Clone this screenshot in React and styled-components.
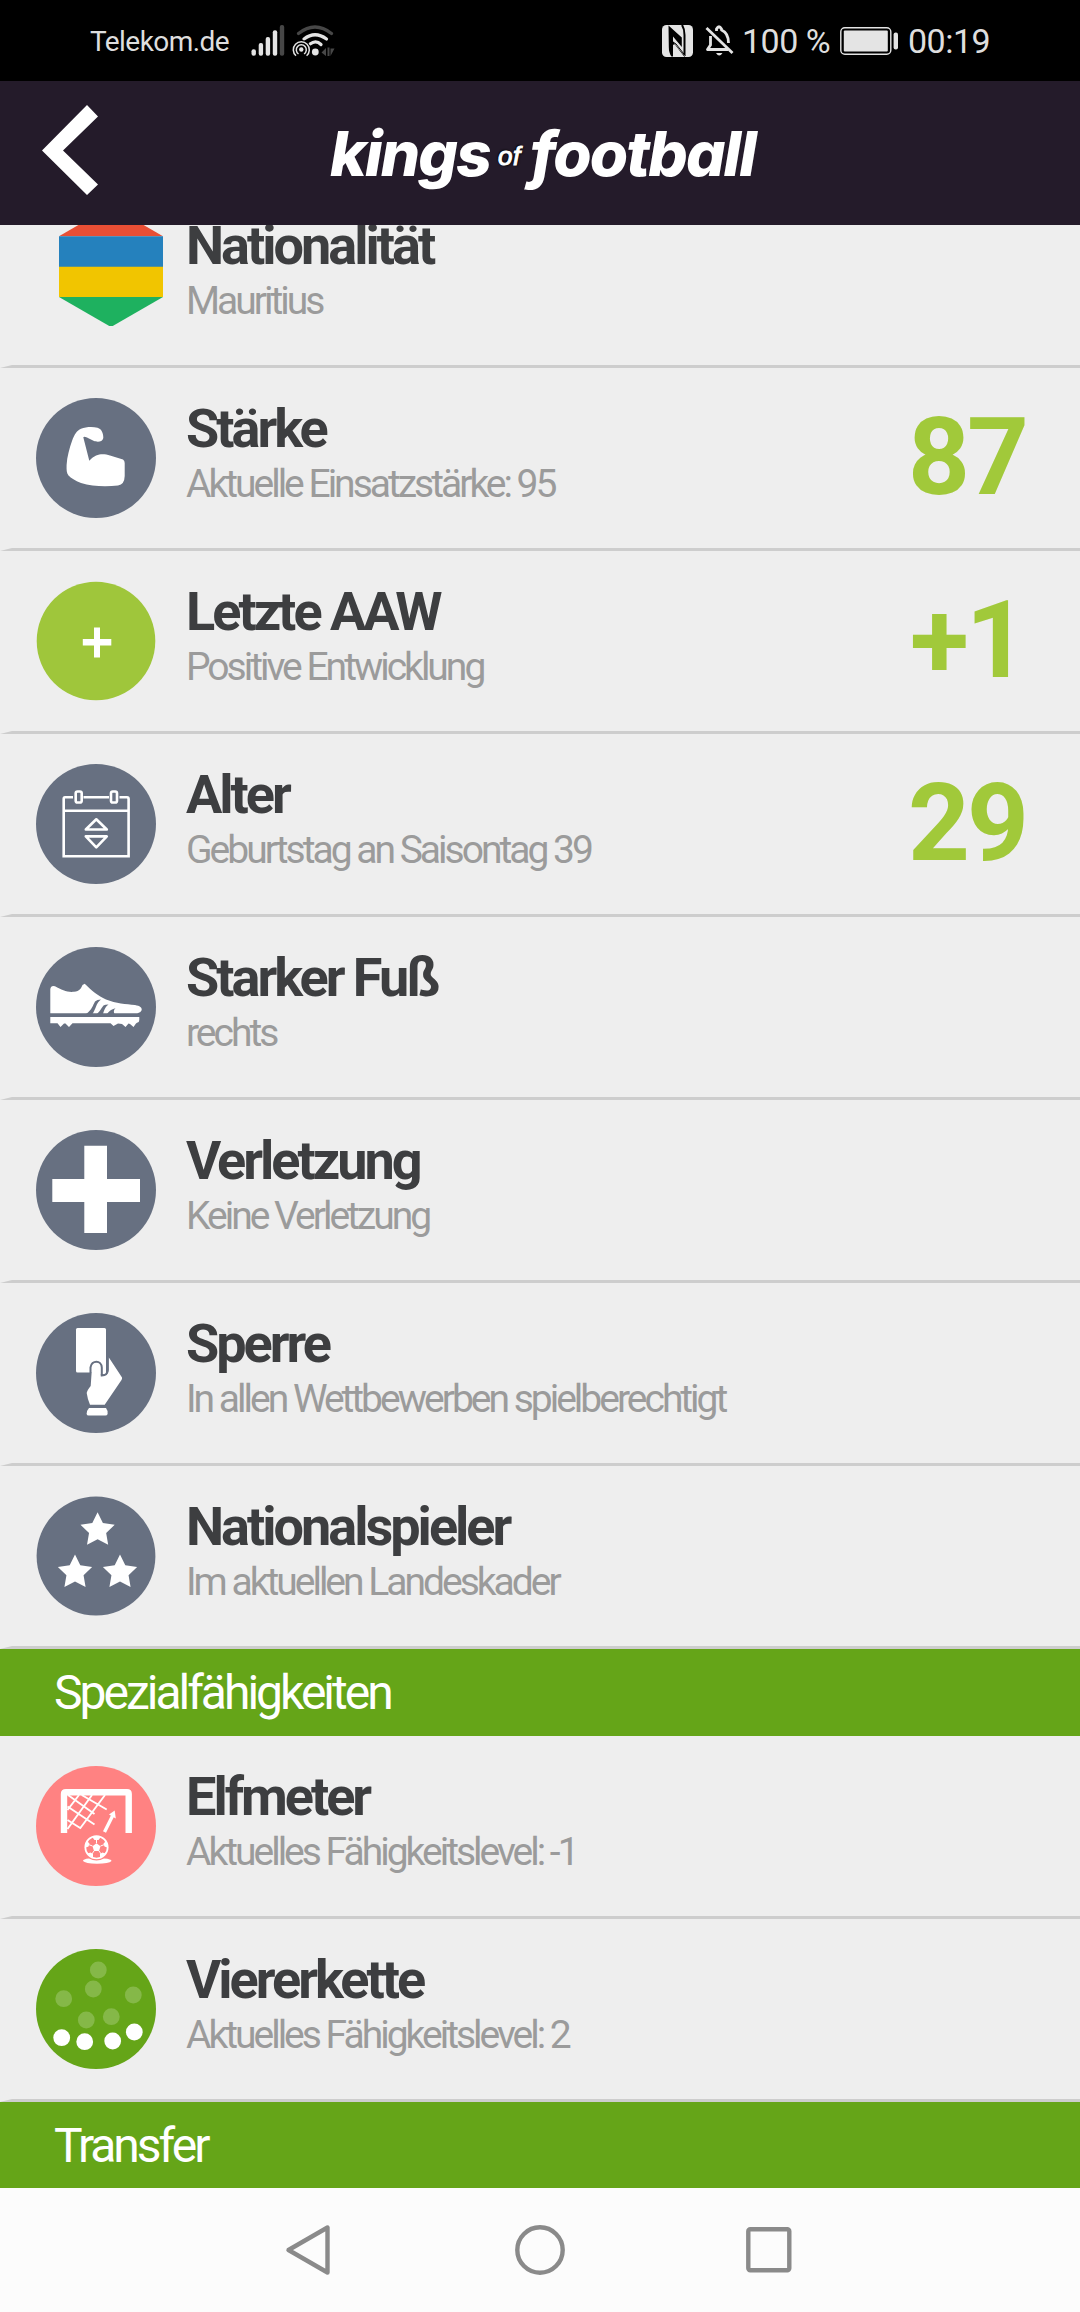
import React from 'react';
import styled, { createGlobalStyle } from 'styled-components';

const GlobalStyle = createGlobalStyle`
  * {
    box-sizing: border-box;
  }
  body {
    margin: 0;
    background: #eee;
    font-family: Roboto, 'Liberation Sans', sans-serif;
  }
  svg {
    display: block;
    flex-shrink: 0;
  }
`;

// Styled Components
const Screen = styled.div`
  display: flex;
  flex-direction: column;
  width: 1080px;
  height: 2312px;
  overflow: hidden;
`;

const StatusBar = styled.div`
  display: flex;
  align-items: center;
  justify-content: space-between;
  height: 81px;
  flex-shrink: 0;
  padding: 0 90px;
  background: #000;
  color: #dedede;
`;

const StatusGroup = styled.div`
  display: flex;
  align-items: center;
  height: 81px;
`;

const Carrier = styled.span`
  width: 161px;
  font-size: 28px;
  line-height: 33px;
  letter-spacing: -0.55px;
  padding-top: 1px;
`;

const StatusText = styled.span`
  width: ${(props) => props.$width}px;
  font-size: 34px;
  line-height: 40px;
  letter-spacing: -0.5px;
  white-space: nowrap;
  padding-top: 1px;
`;

const Header = styled.header`
  display: flex;
  height: 144px;
  flex-shrink: 0;
  background: #241b2a;
  color: #fff;
`;

const BackButton = styled.button`
  display: flex;
  align-items: flex-start;
  width: 330px;
  padding: 24px 0 0 41px;
  border: 0;
  background: none;
`;

const Logo = styled.h1`
  display: flex;
  align-items: baseline;
  margin: 0;
  padding-top: 37px;
  font-family: Inter, 'Liberation Sans', sans-serif;
  font-size: 62px;
  line-height: 72px;
  font-style: italic;
  font-weight: 800;
`;

const LogoWord = styled.span`
  width: ${(props) => props.$width}px;
  letter-spacing: ${(props) => props.$spacing}px;
`;

const LogoOf = styled.span`
  width: 32px;
  position: relative;
  top: -11px;
  font-family: 'Liberation Sans', Arial, sans-serif;
  font-size: 26px;
  line-height: 25px;
  font-weight: 400;
  letter-spacing: 0.5px;
  -webkit-text-stroke: 1px #fff;
  text-shadow: 1px 1px 2px #000, -1px -1px 2px #000;
`;

const List = styled.main`
  height: 1963px;
  flex-shrink: 0;
  overflow: hidden;
`;

// The list is scrolled, so the first row starts under the header
const Scrolled = styled.div`
  display: flex;
  flex-direction: column;
  margin-top: -40px;
`;

const Row = styled.div`
  display: flex;
  height: 183px;
  flex-shrink: 0;
  background: #eee;
  border-bottom: 3px solid #cdcdcd;
  border-left: 12px solid transparent;
`;

const IconSlot = styled.div`
  width: 174px;
  padding: ${(props) => (props.$flag ? '21px 0 0 47px' : '30px 0 0 24px')};
`;

const RowText = styled.div`
  flex: 1;
  padding-top: 31px;
`;

const Title = styled.h2`
  margin: 0;
  font-size: 54px;
  line-height: 60px;
  font-weight: 700;
  letter-spacing: -3px;
  color: #3d3e40;
`;

const Subtitle = styled.p`
  margin: 0;
  font-size: 39px;
  line-height: 50px;
  letter-spacing: -3px;
  color: #9b9b9b;
`;

const Value = styled.div`
  width: ${(props) => (props.$signed ? 170 : 172)}px;
  padding-top: 26px;
  font-size: 108px;
  line-height: 126px;
  font-weight: 700;
  letter-spacing: -3px;
  color: #a1c93a;
`;

const Section = styled.div`
  height: 87px;
  flex-shrink: 0;
  padding: 16px 0 0 54px;
  background: #65a518;
  color: #fff;
  font-size: 48px;
  line-height: 56px;
  letter-spacing: -3px;
`;

const NavBar = styled.nav`
  display: grid;
  grid-template-columns: repeat(3, 231px);
  justify-content: center;
  justify-items: center;
  align-items: center;
  height: 124px;
  background: #fcfcfc;
`;

const SLATE = '#677081';

const Badge = ({ color = SLATE, r = 60, children }) => (
  <svg width="120" height="120" viewBox="0 0 120 120">
    <circle cx="60" cy="60" r={r} fill={color} />
    {children}
  </svg>
);

const FlagIcon = () => (
  <svg width="104" height="120" viewBox="0 0 104 120">
    <path d="M52 0L104 30.3H0z" fill="#e94f35" />
    <path d="M0 30.3H104V61H0z" fill="#2581bd" />
    <path d="M0 60.7H104V91H0z" fill="#f1c500" />
    <path d="M0 91H104L52 121z" fill="#1eb15f" />
  </svg>
);

const ArmIcon = () => (
  <Badge>
    <path
      fill="#fff"
      d="M47.3 39.3L53.3 62.7C61 54.5 68 56 74 57.5L87 61.5Q88.7 62.5 88.7 65V78Q88.5 86.5 82 87.5C70 89 56 88.5 45 85C39 82.5 35 80 32.5 77.5C30.5 75 30.5 72 30.6 67C31 59 33.5 50 36 43C38.5 36 41 32.5 45 30.7C50 28.7 57 28.7 61.5 29.7C66 31 67.5 36 67.3 40C66.5 44.5 60.5 44 58 43L51 39.5Q48 38 47.3 39.3z"
    />
  </Badge>
);

const PlusIcon = () => (
  <Badge color="#9fc63b" r={59.3}>
    <path d="M58 46.5H64V58H75.3V64.5H64V76.5H58V64.5H46.8V58H58z" fill="#fff" />
  </Badge>
);

const CalendarIcon = () => (
  <Badge>
    <g fill="none" stroke="#fff" strokeWidth="2.6">
      <path d="M37 33.3H29Q27.7 33.3 27.7 35V92.3H92.6V35Q92.6 33.3 91 33.3H83.5M47.5 33.3H73M27.7 46.7H92.6" />
      <rect x="39.7" y="27.5" width="6" height="11" rx="1.8" />
      <rect x="75" y="27.5" width="6" height="11" rx="1.8" />
      <path d="M60.3 55.3L70.8 65.5H49.8zM60.3 83.3L70.8 72.4H49.8z" strokeLinejoin="round" />
    </g>
  </Badge>
);

const ShoeIcon = () => (
  <Badge>
    <path
      fill="#fff"
      d="M14.3 66.3V42Q15 38 19 39.3C26 43 31 45.5 38 44.8C44 44 44.5 42 46.5 38L48.7 36.8C56 44 62 49 70 52.5C80 56.5 90 57 99 58C104 59 106 60.5 105.7 63C105 65.5 102 66.3 99 66.3z"
    />
    <path
      fill={SLATE}
      d="M50 67C56 63 57 58 59 54.5Q61 52.5 65 52.5C60 56 60 62 56.5 67zM61 67C65 63 66 60 67.5 58.5Q69 57.5 72.5 57.5C69 60 68 64 67 67zM71 67C74 63.5 75 62.5 79.5 61.3C77.5 63 77.5 65 78.5 67z"
    />
    <path
      fill="#fff"
      d="M14.3 70H103.3V73Q103.3 75.5 101 75.8L100 76.5L97.5 80L94 77L92.5 76.5L89.5 80L86 77L82 76.5L77.5 79L74.5 76.3H36.5L33 80L29.5 76.5H28L24.5 80L21.5 76.3H14.3z"
    />
  </Badge>
);

const CrossIcon = () => (
  <Badge>
    <path d="M48.3 15.7H71V49H104V72H71V103H48.3V72H16.3V49H48.3z" fill="#fff" />
  </Badge>
);

const CardIcon = () => (
  <Badge>
    <rect x="40" y="15" width="30" height="44.5" rx="1.5" fill="#fff" />
    <path d="M62 50H70V61Q66 62 62 60z" fill="#fff" />
    <path
      fill="#fff"
      d="M56 54Q57 49.8 60.5 49.8Q64.5 50 64.8 54V62.5Q72.7 63 72.7 57V44.3L75.5 48.5L86 64.5Q86.3 65.5 85.5 67L68.7 91.7H54Q51.5 86 50.7 80Q51 77.5 54.7 73z"
    />
    <path
      fill="none"
      stroke={SLATE}
      strokeWidth="2"
      d="M54.5 60V54.5C55.5 46.7 65.5 46.7 65.8 54.5V62.5Q71.5 62.5 71.6 57V43"
    />
    <path d="M53 95H70Q72.3 98 71.6 101Q71 102.5 69.5 102.5H52.5Q51 102.5 50.6 101Q51 97 53 95z" fill="#fff" />
  </Badge>
);

const starPath = (cx, cy) => {
  const points = [];
  for (let i = 0; i < 10; i++) {
    const r = i % 2 ? 9 : 18;
    const a = (Math.PI * i) / 5 - Math.PI / 2;
    points.push(`${(cx + r * Math.cos(a)).toFixed(2)},${(cy + r * Math.sin(a)).toFixed(2)}`);
  }
  return points.join(' ');
};

const StarsIcon = () => (
  <Badge r={59.4}>
    <polygon points={starPath(61.6, 34.3)} fill="#fff" />
    <polygon points={starPath(39, 76.5)} fill="#fff" />
    <polygon points={starPath(84, 76.5)} fill="#fff" />
  </Badge>
);

const PenaltyIcon = () => (
  <Badge color="#ff8282">
    <g fill="none" stroke="#fff">
      <path d="M28 67V28Q28 26.2 30 26.2H91Q92.7 26.2 92.7 28V67" strokeWidth="6.4" />
      <path
        strokeWidth="1.9"
        d="M45.7 29L70.7 43.5M32 29L58.5 48M31.5 40.5L58.5 58.5M31.5 54L45 62.5M69 29L44 62.5M56 29L31.5 63M43 29L31.5 44"
      />
      <path d="M68.5 66L76.5 50" strokeWidth="3.3" />
      <circle cx="60.5" cy="81.3" r="11.2" strokeWidth="1.7" />
      <path d="M60.5 77V71M64.5 80L70 78M63 85L66.5 90M58 85L54.5 90M56.5 80L51 78" strokeWidth="1" />
    </g>
    <g fill="#fff">
      <path d="M78.7 44.5L79.8 52.5L73 48.5z" />
      <path d="M60.5 77.3L64.5 80.2L63 85H58L56.5 80.2z" />
      <path d="M56 70.7H65L62.5 74H58.5zM70 75L72.3 82L68.5 80.5L67.5 77.5zM51 75L48.7 82L52.5 80.5L53.5 77.5zM69.5 87.5L64 92L64 88L66.5 86.5zM51.5 87.5L57 92L57 88L54.5 86.5z" />
      <path d="M47 95Q47 93 53 92.5Q60.5 96.5 68 92.5Q75.5 93 75.5 95Q73 97.8 61 97.8Q49 97.5 47 95z" />
    </g>
  </Badge>
);

const faded = [[62.3, 21], [57.3, 40], [27.7, 49.7], [97.3, 46], [50.3, 71], [75.3, 67.7]];
const solid = [[25.7, 88.7], [48.7, 92.7], [76.7, 92], [98.3, 83]];

const DefenceIcon = () => (
  <Badge color="#65a518">
    {faded.map(([x, y]) => <circle key={x} cx={x} cy={y} r="8.4" fill="#85b848" />)}
    {solid.map(([x, y]) => <circle key={x} cx={x} cy={y} r="8.4" fill="#fff" />)}
  </Badge>
);

const SignalIcon = () => (
  <svg width="84" height="33" viewBox="0 0 84 33">
    <g fill="#e4e4e4">
      <rect x="0.5" y="25.3" width="4.4" height="6.5" rx="2" />
      <rect x="7.7" y="19" width="4.4" height="12.8" rx="2" />
      <rect x="14.7" y="13" width="4.4" height="18.8" rx="2" />
      <rect x="21.8" y="6.3" width="4.4" height="25.5" rx="2" />
    </g>
    <rect x="28.8" y="1" width="4.4" height="30.8" rx="2" fill="#474747" />
    <g fill="none" strokeLinecap="round">
      <path d="M47.5 9.5Q64 -3.5 80.5 9.5" stroke="#474747" strokeWidth="3.2" />
      <path d="M53 15Q64 6.5 75.5 15" stroke="#e4e4e4" strokeWidth="3.2" />
      <path d="M59 20Q65 15.5 70 20.5" stroke="#e4e4e4" strokeWidth="3.2" />
    </g>
    <circle cx="64.3" cy="28" r="3.4" fill="#e4e4e4" />
    <circle cx="50.3" cy="25.5" r="9.5" fill="#000" />
    <circle cx="50.3" cy="25.5" r="2.2" fill="#e4e4e4" />
    <g fill="none" stroke="#e4e4e4" strokeWidth="1.5">
      <path d="M47.5 30A5 5 0 1 1 53.1 30" />
      <path d="M45 31.8A8 8 0 1 1 55.6 31.8" />
    </g>
    <path d="M75 24V32L70.5 28.5zM76.5 23.5H78.5V32H76.5zM79.5 24.5H83.5L79.5 32z" fill="#474747" />
  </svg>
);

const NfcIcon = () => (
  <svg width="43" height="32" viewBox="0 0 43 32">
    <rect width="31" height="32" rx="4.5" fill="#e4e4e4" />
    <path
      d="M6.5 0.5L19.8 12.5V22L11 11.5V16.5L23 31.5L22 32L11 21V15.5V31.5H9.5Q6.8 28 6.8 22z"
      fill="#000"
    />
    <path d="M11 17L22.5 32H12.5Q11 29 11 25z" fill="#e4e4e4" />
    <path d="M12 20L11 17L14 19L23.5 31" stroke="#000" fill="none" />
    <path d="M20 0C22 3 22.5 6 22.5 10V30" stroke="#000" strokeWidth="2" fill="none" />
  </svg>
);

const MutedIcon = () => (
  <svg width="37" height="32" viewBox="0 0 37 32">
    <g fill="none" stroke="#e4e4e4" strokeWidth="2.8">
      <path d="M5.5 11V20L2.5 24.5H23M11.5 6V4Q14 -0.5 16.5 4V5Q23.5 8 23.5 18" strokeLinejoin="round" />
      <path d="M1.5 3L27.5 28" />
    </g>
    <path d="M11 28H17.5Q14.2 33 11 28z" fill="#e4e4e4" />
  </svg>
);

const BatteryIcon = () => (
  <svg width="68" height="28" viewBox="0 0 68 28">
    <rect x="0.8" y="0.8" width="50" height="26.4" rx="4" fill="none" stroke="#e4e4e4" strokeWidth="1.4" />
    <rect x="3.8" y="3.6" width="44" height="20.8" rx="1" fill="#e4e4e4" />
    <rect x="53.6" y="5.5" width="4.4" height="17" rx="2" fill="#e4e4e4" />
  </svg>
);

const rows = [
  { title: 'Nationalität', text: 'Mauritius', icon: <FlagIcon />, flag: true },
  { title: 'Stärke', text: 'Aktuelle Einsatzstärke: 95', icon: <ArmIcon />, value: '87' },
  { title: 'Letzte AAW', text: 'Positive Entwicklung', icon: <PlusIcon />, value: '+1' },
  { title: 'Alter', text: 'Geburtstag an Saisontag 39', icon: <CalendarIcon />, value: '29' },
  { title: 'Starker Fuß', text: 'rechts', icon: <ShoeIcon /> },
  { title: 'Verletzung', text: 'Keine Verletzung', icon: <CrossIcon /> },
  { title: 'Sperre', text: 'In allen Wettbewerben spielberechtigt', icon: <CardIcon /> },
  { title: 'Nationalspieler', text: 'Im aktuellen Landeskader', icon: <StarsIcon /> },
];

const skills = [
  { title: 'Elfmeter', text: 'Aktuelles Fähigkeitslevel: -1', icon: <PenaltyIcon /> },
  { title: 'Viererkette', text: 'Aktuelles Fähigkeitslevel: 2', icon: <DefenceIcon /> },
];

const InfoRow = ({ title, text, icon, value, flag }) => (
  <Row>
    <IconSlot $flag={flag}>{icon}</IconSlot>
    <RowText>
      <Title>{title}</Title>
      <Subtitle>{text}</Subtitle>
    </RowText>
    {value && <Value $signed={value.startsWith('+')}>{value}</Value>}
  </Row>
);

const App = () => {
  return (
    <Screen>
      <GlobalStyle />
      <StatusBar>
        <StatusGroup>
          <Carrier>Telekom.de</Carrier>
          <SignalIcon />
        </StatusGroup>
        <StatusGroup>
          <NfcIcon />
          <MutedIcon />
          <StatusText $width={98}>100 %</StatusText>
          <BatteryIcon />
          <StatusText $width={82}>00:19</StatusText>
        </StatusGroup>
      </StatusBar>

      <Header>
        <BackButton aria-label="Zurück">
          <svg width="58" height="92" viewBox="0 0 58 92">
            <path d="M46 0L57 11.5L22 45.5L57 79.5L46 90L1 45.5z" fill="#fff" />
          </svg>
        </BackButton>
        <Logo>
          <LogoWord $width={168} $spacing={-1.8}>kings</LogoWord>
          <LogoOf>of</LogoOf>
          <LogoWord $width={230} $spacing={-1.9}>football</LogoWord>
        </Logo>
      </Header>

      <List>
        <Scrolled>
          {rows.map((row) => <InfoRow key={row.title} {...row} />)}
          <Section>Spezialfähigkeiten</Section>
          {skills.map((row) => <InfoRow key={row.title} {...row} />)}
          <Section>Transfer</Section>
        </Scrolled>
      </List>

      <NavBar>
        <svg width="52" height="52" viewBox="0 0 52 52">
          <path d="M44.5 3.5V48.5L5.5 26z" fill="none" stroke="#8a8a8a" strokeWidth="4.4" strokeLinejoin="round" />
        </svg>
        <svg width="52" height="52" viewBox="0 0 52 52">
          <circle cx="26" cy="26" r="22.7" fill="none" stroke="#8a8a8a" strokeWidth="4.4" />
        </svg>
        <svg width="52" height="52" viewBox="0 0 52 52">
          <rect x="3.3" y="5.3" width="41" height="41" rx="2" fill="none" stroke="#8a8a8a" strokeWidth="4.4" />
        </svg>
      </NavBar>
    </Screen>
  );
};

export default App;
